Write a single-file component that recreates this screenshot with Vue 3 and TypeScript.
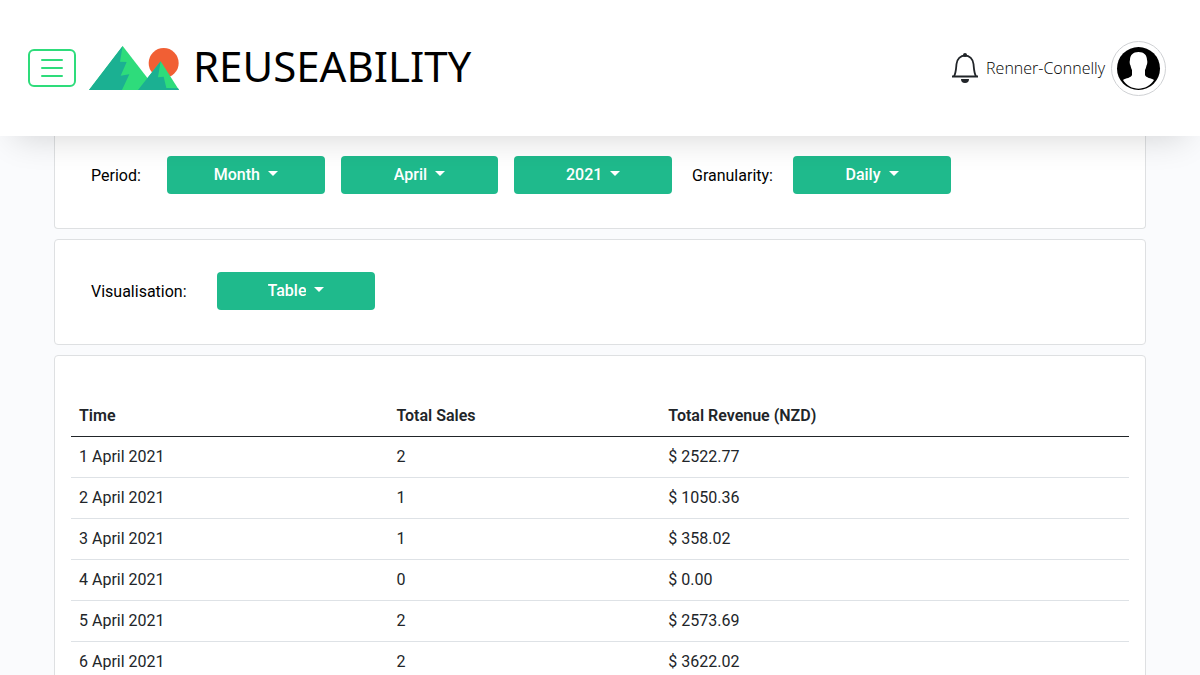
<script setup lang="ts">
import { ref } from 'vue'

interface SalesRow {
  time: string
  sales: number
  revenue: string
}

const periods: string[] = ['Year', 'Month', 'Week', 'Day']
const months: string[] = ['January', 'February', 'March', 'April', 'May', 'June']
const years: string[] = ['2019', '2020', '2021']
const granularities: string[] = ['Monthly', 'Weekly', 'Daily']
const visualisations: string[] = ['Table', 'Graph']

const period = ref('Month')
const month = ref('April')
const year = ref('2021')
const granularity = ref('Daily')
const visualisation = ref('Table')

const rows: SalesRow[] = [
  { time: '1 April 2021', sales: 2, revenue: '2522.77' },
  { time: '2 April 2021', sales: 1, revenue: '1050.36' },
  { time: '3 April 2021', sales: 1, revenue: '358.02' },
  { time: '4 April 2021', sales: 0, revenue: '0.00' },
  { time: '5 April 2021', sales: 2, revenue: '2573.69' },
  { time: '6 April 2021', sales: 2, revenue: '3622.02' },
]
</script>

<template>
  <div class="page">
    <header class="topbar">
      <button class="menu" type="button" aria-label="Menu">
        <svg viewBox="0 0 16 16" width="32" height="32" aria-hidden="true">
          <path d="M3 4h10M3 8h10M3 12h10" fill="none" stroke="currentColor" stroke-linecap="round" />
        </svg>
      </button>
      <a class="brand" href="#">
        <svg class="logo" viewBox="0 0 270 132" aria-hidden="true">
          <circle cx="224" cy="51" r="45" fill="#f15f34" />
          <path d="M101 0 0 132H203Z" fill="#2edc7b" />
          <path d="M101 0 0 132H99L121 85 95 89 113 48 93 47Z" fill="#1bb092" />
          <path d="M215 46 147 132H270Z" fill="#2edc7b" />
          <path d="M215 46 147 132H270L267 127 232 126 224 92 207 94Z" fill="#1bb092" />
        </svg>
        <span class="name">REUSEABILITY</span>
      </a>
      <div class="account">
        <button class="bell" type="button" aria-label="Notifications">
          <svg viewBox="0 0 26 30" width="26" height="30" aria-hidden="true">
            <path d="M2 23.500C4 20 4 16 4.500 11C5 6 8.500 2.500 13 2.500S21 6 21.500 11C22 16 22 20 24 23.500" fill="none" stroke="#212529" stroke-width="1.800" />
            <path d="M0 23.500H26" stroke="#212529" stroke-width="2" />
            <circle cx="13" cy="2" r="2" fill="#212529" />
            <path d="M9 26H17A4 4 0 0 1 9 26Z" fill="#212529" />
          </svg>
        </button>
        <span class="user">Renner-Connelly</span>
        <svg class="avatar" viewBox="0 0 55 55" width="55" height="55" role="img" aria-label="Profile picture">
          <circle cx="27.500" cy="27.500" r="27" fill="#fff" stroke="#cfd1d4" />
          <circle cx="27.500" cy="27.500" r="21.500" fill="#000" />
          <path d="M27.500 11C33 11 36 14 36 19C36.500 20 36.500 23 35.500 24.500C35 27 34.500 28 34 29V34C35 37 40 37 43 39C36 50.500 19 50.500 12 39C15 37 20 37 21 34V29C20.500 28 20 27 19.500 24.500C18.500 23 18.500 20 19 19C19 14 22 11 27.500 11Z" fill="#fff" />
        </svg>
      </div>
    </header>

    <main class="content">
      <section class="card filters">
        <label class="caption period-caption" for="period">Period:</label>
        <div class="group">
          <div class="dropdown">
            <select id="period" v-model="period">
              <option v-for="p in periods" :key="p">{{ p }}</option>
            </select>
          </div>
          <div class="dropdown">
            <select v-model="month" aria-label="Month">
              <option v-for="m in months" :key="m">{{ m }}</option>
            </select>
          </div>
          <div class="dropdown">
            <select v-model="year" aria-label="Year">
              <option v-for="y in years" :key="y">{{ y }}</option>
            </select>
          </div>
        </div>
        <label class="caption granularity-caption" for="granularity">Granularity:</label>
        <div class="dropdown">
          <select id="granularity" v-model="granularity">
            <option v-for="g in granularities" :key="g">{{ g }}</option>
          </select>
        </div>
      </section>

      <section class="card view">
        <label class="caption view-caption" for="visualisation">Visualisation:</label>
        <div class="dropdown">
          <select id="visualisation" v-model="visualisation">
            <option v-for="v in visualisations" :key="v">{{ v }}</option>
          </select>
        </div>
      </section>

      <section class="card report">
        <table>
          <colgroup>
            <col class="col-time" />
            <col class="col-sales" />
            <col />
          </colgroup>
          <thead>
            <tr>
              <th scope="col">Time</th>
              <th scope="col">Total Sales</th>
              <th scope="col">Total Revenue (NZD)</th>
            </tr>
          </thead>
          <tbody>
            <tr v-for="row in rows" :key="row.time">
              <td>{{ row.time }}</td>
              <td>{{ row.sales }}</td>
              <td>$ {{ row.revenue }}</td>
            </tr>
          </tbody>
        </table>
      </section>
    </main>
  </div>
</template>

<style>
body {
  margin: 0;
}
</style>

<style scoped>
.page {
  height: 100vh;
  overflow: hidden;
  background: #fafbfd;
  color: #212529;
  font-family: Roboto, "Liberation Sans", sans-serif;
  font-size: 16px;
  line-height: 24px;
}

.page * {
  box-sizing: border-box;
}

.topbar {
  position: relative;
  z-index: 1;
  display: flex;
  align-items: center;
  padding: 40px 34px 40px 28px;
  background: #fff;
  box-shadow: 0 16px 32px -14px rgba(0, 0, 0, 0.16);
}

.menu {
  display: flex;
  align-items: center;
  justify-content: center;
  width: 48px;
  height: 38px;
  padding: 0;
  border: 2px solid #2edc7b;
  border-radius: 6px;
  background: transparent;
  color: #2edc7b;
}

.brand {
  display: flex;
  align-items: center;
  gap: 14px;
  margin-left: 13px;
  color: #000;
  text-decoration: none;
}

.logo {
  width: 90px;
  height: 44px;
}

.name {
  padding-bottom: 4px;
  font-family: "Noto Sans", "Open Sans", sans-serif;
  font-size: 42px;
  line-height: 52px;
}

.account {
  display: flex;
  align-items: center;
  margin-left: auto;
}

.bell {
  display: flex;
  padding: 0;
  border: 0;
  background: transparent;
}

.user {
  margin: 0 6px 0 8px;
  color: #000;
  font-family: "Open Sans", "Noto Sans", sans-serif;
  font-weight: 300;
}

.content {
  display: flex;
  flex-direction: column;
  gap: 10px;
  padding: 0 54px;
}

.card {
  border: 1px solid #dee0e2;
  border-radius: 4px;
  background: #fff;
}

.filters,
.view {
  display: flex;
  align-items: center;
  padding: 32px 36px 34px;
}

.filters {
  padding-top: 20px;
  border-top: 0;
  border-radius: 0 0 4px 4px;
}

.caption {
  padding-top: 2px;
  color: #000;
}

.period-caption {
  width: 76px;
}

.group {
  display: flex;
  gap: 16px;
  width: 505px;
}

.group .dropdown {
  flex: 1;
}

.granularity-caption {
  width: 121px;
  padding-left: 20px;
}

.view-caption {
  width: 126px;
}

.dropdown {
  display: flex;
  align-items: center;
  justify-content: center;
  gap: 8px;
  width: 158px;
  height: 38px;
  border-radius: 4px;
  background: #1fba8c;
  color: #fff;
}

.dropdown::after {
  content: "";
  margin-bottom: 4px;
  border: 5px solid transparent;
  border-top-color: currentColor;
  border-bottom: 0;
}

.dropdown select {
  field-sizing: content;
  appearance: none;
  padding: 0;
  border: 0;
  background: transparent;
  color: inherit;
  font: inherit;
  font-weight: 500;
}

.dropdown option {
  color: #212529;
}

.report {
  padding: 40px 16px;
}

table {
  width: 100%;
  border-collapse: collapse;
  table-layout: fixed;
}

.col-time {
  width: 30%;
}

.col-sales {
  width: 25.7%;
}

th,
td {
  padding: 8px;
  border-bottom: 1px solid #dee2e6;
  text-align: left;
}

th {
  border-bottom-color: #212529;
  font-weight: 600;
}
</style>
